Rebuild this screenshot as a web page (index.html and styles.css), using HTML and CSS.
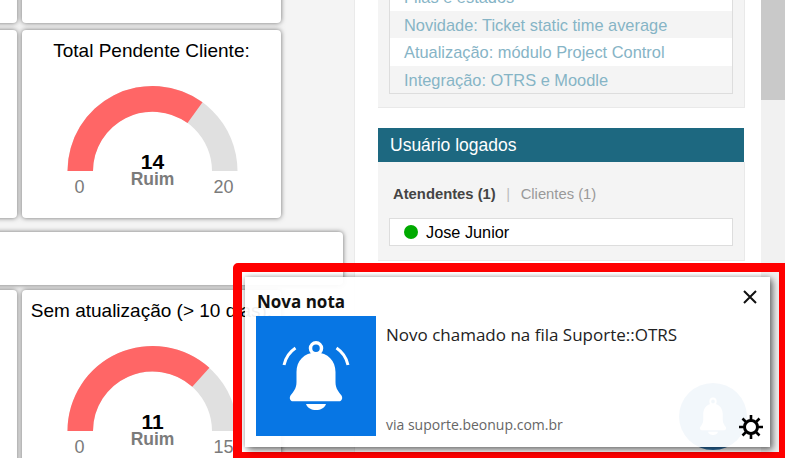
FILE: index.html
```html
<!DOCTYPE html>
<html lang="en">
<head>
  <meta charset="UTF-8">
  <meta name="viewport" content="width=device-width, initial-scale=1.0">
  <title>Dashboard</title>
  <link rel="stylesheet" href="styles.css">
</head>
<body>
  <div class="layout">
    <div class="main">
      <div class="card-row">
        <div class="card"></div>
        <div class="card"></div>
      </div>
      <div class="card-row">
        <div class="card"></div>
        <div class="card">
          <h3 class="card-title">Total Pendente Cliente:</h3>
          <svg class="gauge" width="259" height="130" viewBox="0.500 0 259 130">
            <path fill="#e0e0e0" d="M46 101 A85 85 0 0 1 216 101 H190.500 A59.500 59.500 0 0 0 71.500 101 Z"/>
            <path fill="#ff6666" d="M46 101 A85 85 0 0 1 181 32.200 L166 53.100 A59.500 59.500 0 0 0 71.500 101 Z"/>
            <text class="gauge-value" x="131" y="99">14</text>
            <text class="gauge-label" x="131" y="115">Ruim</text>
            <text class="gauge-limit" x="58" y="123">0</text>
            <text class="gauge-limit" x="202" y="123">20</text>
          </svg>
        </div>
      </div>
      <div class="card card-wide"></div>
      <div class="card-row">
        <div class="card"></div>
        <div class="card">
          <h3 class="card-title">Sem atualização (&gt; 10 dias):</h3>
          <svg class="gauge" width="259" height="130" viewBox="0.500 0 259 130">
            <path fill="#e0e0e0" d="M46 101 A85 85 0 0 1 216 101 H190.500 A59.500 59.500 0 0 0 71.500 101 Z"/>
            <path fill="#ff6666" d="M46 101 A85 85 0 0 1 187.900 37.800 L170.800 56.800 A59.500 59.500 0 0 0 71.500 101 Z"/>
            <text class="gauge-value" x="131" y="99">11</text>
            <text class="gauge-label" x="131" y="115">Ruim</text>
            <text class="gauge-limit" x="58" y="123">0</text>
            <text class="gauge-limit" x="202" y="123">15</text>
          </svg>
        </div>
      </div>
    </div>

    <div class="sidebar">
      <div class="panel panel-news">
        <ul class="news-list">
          <li>Filas e estados</li>
          <li>Novidade: Ticket static time average</li>
          <li>Atualização: módulo Project Control</li>
          <li>Integração: OTRS e Moodle</li>
        </ul>
      </div>
      <div class="panel-header">Usuário logados</div>
      <div class="panel panel-users">
        <div class="tabs">
          <span class="tab-active">Atendentes (1)</span>
          <span class="tab-sep">|</span>
          <span class="tab">Clientes (1)</span>
        </div>
        <div class="user-row">
          <span class="status-dot"></span>
          <span>Jose Junior</span>
        </div>
      </div>
    </div>

    <div class="scrollbar">
      <div class="scrollbar-thumb"></div>
    </div>
  </div>

  <div class="float-button">
    <svg width="30" height="39" viewBox="30 24 60 72" preserveAspectRatio="none">
      <circle cx="60" cy="32.300" r="5.500" fill="none" stroke="#fff" stroke-width="3.500"/>
      <path fill="#fff" d="M60 36.500 C48 36.500 40.500 45 40.500 56 V66 C40.500 73 37 76 34.500 79.500 C33 82 34 85.300 37 85.300 H83 C86 85.300 87 82 85.500 79.500 C83 76 79.500 73 79.500 66 V56 C79.500 45 72 36.500 60 36.500 Z"/>
      <path fill="#fff" d="M50 88 H70 C68.500 92 64.500 94 60 94 C55.500 94 51.500 92 50 88 Z"/>
    </svg>
  </div>

  <div class="highlight">
    <div class="toast">
      <div class="toast-title">Nova nota</div>
      <div class="toast-body">
        <svg class="toast-icon" width="120" height="120" viewBox="0 0 120 120">
          <rect width="120" height="120" fill="#0776e4"/>
          <circle cx="60" cy="32.300" r="5.500" fill="none" stroke="#fff" stroke-width="3.500"/>
          <path fill="#fff" d="M60 36.500 C48 36.500 40.500 45 40.500 56 V66 C40.500 73 37 76 34.500 79.500 C33 82 34 85.300 37 85.300 H83 C86 85.300 87 82 85.500 79.500 C83 76 79.500 73 79.500 66 V56 C79.500 45 72 36.500 60 36.500 Z"/>
          <path fill="#fff" d="M50 88 H70 C68.500 92 64.500 94 60 94 C55.500 94 51.500 92 50 88 Z"/>
          <path fill="none" stroke="#fff" stroke-width="3" d="M28 49 C29.500 42 33.500 36 39.500 32 M92 49 C90.500 42 86.500 36 80.500 32"/>
        </svg>
        <div class="toast-text">
          <div class="toast-message">Novo chamado na fila Suporte::OTRS</div>
          <div class="toast-source">via suporte.beonup.com.br</div>
        </div>
      </div>
      <svg class="toast-close" width="14" height="14" viewBox="0 0 14 14">
        <path stroke="#111" stroke-width="2" d="M1 1 L13 13 M13 1 L1 13"/>
      </svg>
      <svg class="toast-gear" width="26" height="26" viewBox="0 0 26 26">
        <circle cx="13" cy="13" r="6.500" fill="none" stroke="#000" stroke-width="3"/>
        <path stroke="#000" stroke-width="2.600" d="M13 1 V6 M13 20 V25 M1 13 H6 M20 13 H25 M4.500 4.500 L8 8 M18 18 L21.500 21.500 M21.500 4.500 L18 8 M8 18 L4.500 21.500"/>
      </svg>
    </div>
  </div>
</body>
</html>
```

FILE: styles.css
```css
html, body {
  height: 100%;
}
body {
  margin: 0;
  overflow: hidden;
  position: relative;
  font-family: "Liberation Sans", Arial, sans-serif;
  background: #fff;
}
.layout {
  display: flex;
  height: 458px;
  overflow: hidden;
}
.main {
  flex: none;
  width: 597px;
  margin-left: -242px;
  margin-top: -165px;
  background: #f4f4f4;
  border-right: 1px solid #eaeaea;
  box-sizing: border-box;
}
.card-row {
  display: flex;
  gap: 5px;
  margin-bottom: 7px;
}
.card {
  flex: none;
  width: 259px;
  height: 188px;
  background: #fff;
  border-radius: 4px;
  box-shadow: 0 0 5px rgba(0, 0, 0, 0.55);
}
.card-wide {
  width: 585px;
  height: 53px;
  margin-top: 14px;
  margin-bottom: 5px;
}
.card-title {
  margin: 0;
  padding-top: 10px;
  height: 30px;
  line-height: 22px;
  font-size: 19px;
  font-weight: normal;
  text-align: center;
  color: #000;
  white-space: nowrap;
}
.gauge {
  display: block;
}
.gauge text {
  text-anchor: middle;
}
.gauge-value {
  font-size: 21px;
  font-weight: bold;
  fill: #000;
}
.gauge-label {
  font-size: 17.500px;
  font-weight: bold;
  fill: #7b7b7b;
}
.gauge-limit {
  font-size: 18px;
  fill: #7b7b7b;
}
.sidebar {
  flex: none;
  width: 406px;
  padding-left: 23px;
  box-sizing: border-box;
}
.panel {
  width: 367px;
  background: #f4f4f4;
  box-sizing: border-box;
  border-right: 1px solid #e9e9e9;
  border-bottom: 1px solid #e9e9e9;
}
.panel-news {
  margin-top: -18px;
  padding: 0 11px 13px;
}
.news-list {
  margin: 0;
  padding: 0;
  list-style: none;
  border: 1px solid #ddd;
  font-size: 16.400px;
  color: #86b4c6;
}
.news-list li {
  height: 27.500px;
  line-height: 29px;
  padding-left: 14px;
  background: #fff;
}
.news-list li:nth-child(even),
.news-list li:last-child {
  background: #f4f4f4;
}
.news-list li:nth-child(3) {
  background: #fff;
}
.panel-header {
  width: 366px;
  height: 34px;
  line-height: 35px;
  margin-top: 20px;
  padding-left: 12px;
  box-sizing: border-box;
  background: #1d6880;
  color: #fff;
  font-size: 17.500px;
}
.panel-users {
  padding: 24px 11px 14px;
}
.tabs {
  display: flex;
  gap: 10.500px;
  padding-left: 4px;
  height: 16px;
  line-height: 16px;
  font-size: 14.800px;
}
.tab-active {
  font-weight: bold;
  color: #444;
}
.tab-sep {
  color: #bbb;
}
.tab {
  color: #999;
}
.user-row {
  display: flex;
  align-items: center;
  gap: 8px;
  height: 28px;
  margin-top: 16px;
  padding-top: 1px;
  padding-left: 14px;
  box-sizing: border-box;
  background: #fff;
  border: 1px solid #ddd;
  font-size: 16.300px;
  color: #000;
}
.status-dot {
  width: 14px;
  height: 14px;
  margin-top: -1px;
  border-radius: 50%;
  background: #00aa00;
}
.scrollbar {
  flex: none;
  width: 24px;
  background: #f1f1f1;
}
.scrollbar-thumb {
  height: 100px;
  background: #c9c9c9;
}
.float-button {
  position: absolute;
  left: 679px;
  top: 383px;
  width: 68px;
  height: 67px;
  border-radius: 50%;
  background: #2f76b0;
  display: flex;
  align-items: center;
  justify-content: center;
}
.highlight {
  position: absolute;
  left: 233px;
  top: 263px;
  right: 0;
  bottom: 0;
  border: solid #f00;
  border-width: 9px 6px 6px 9px;
  border-top-left-radius: 5px;
}
.toast {
  position: absolute;
  left: 3px;
  top: 5px;
  width: 525px;
  height: 170px;
  box-sizing: border-box;
  padding: 14px 11px 0;
  background: rgba(255, 255, 255, 0.94);
  box-shadow: 3px 3px 7px rgba(0, 0, 0, 0.5), 0 0 5px rgba(0, 0, 0, 0.25);
  font-family: "Open Sans", "Noto Sans", sans-serif;
  color: #222;
}
.toast-title {
  height: 25px;
  line-height: 22px;
  padding-left: 1px;
  font-size: 17px;
  font-weight: bold;
  color: #111;
}
.toast-body {
  display: flex;
  gap: 10px;
}
.toast-icon {
  flex: none;
}
.toast-text {
  display: flex;
  flex-direction: column;
  justify-content: space-between;
  height: 120px;
}
.toast-message {
  font-size: 17px;
  line-height: 38px;
}
.toast-source {
  font-size: 14px;
  line-height: 20px;
  margin-bottom: 1px;
  color: #666;
}
.toast-close {
  position: absolute;
  top: 13px;
  right: 13px;
}
.toast-gear {
  position: absolute;
  right: 6px;
  bottom: 7px;
}
```
